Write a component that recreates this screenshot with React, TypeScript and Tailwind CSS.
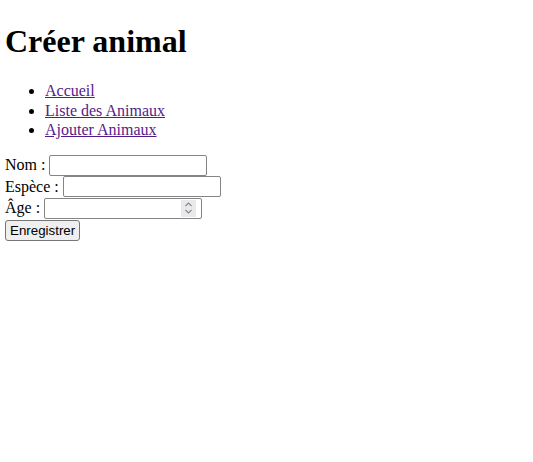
export default function App() {
  return (
    <div className="min-h-screen bg-white px-[5px] pt-[1px] text-[16px] text-black [font-family:'Liberation_Serif','Times_New_Roman',serif]">
      <h1 className="mt-[22px] mb-[21px] text-[32px] font-bold leading-[37px]">
        Créer animal
      </h1>

      <ul className="mb-[15px] list-disc pl-[40px] leading-[19.5px]">
        <li>
          <a href="#" className="text-[#551a8b] underline">
            Accueil
          </a>
        </li>
        <li>
          <a href="#" className="text-[#551a8b] underline">
            Liste des Animaux
          </a>
        </li>
        <li>
          <a href="#" className="text-[#551a8b] underline">
            Ajouter Animaux
          </a>
        </li>
      </ul>

      <form className="flex flex-col items-start">
        <label className="flex h-[21.5px] items-center gap-[4px]">
          Nom :
          <input
            type="text"
            className="h-[21px] w-[158px] rounded-[2px] border border-[#858585] bg-white px-[2px] text-[13px]"
          />
        </label>
        <label className="flex h-[21.5px] items-center gap-[4px]">
          Espèce :
          <input
            type="text"
            className="h-[21px] w-[158px] rounded-[2px] border border-[#858585] bg-white px-[2px] text-[13px]"
          />
        </label>
        <label className="flex h-[21.5px] items-center gap-[4px]">
          Âge :
          <span className="flex h-[21px] w-[158px] items-center justify-end rounded-[2px] border border-[#858585] bg-white pr-[5px]">
            <span className="flex h-[17px] w-[15px] flex-col items-center justify-center bg-[#e9e9ed]">
              <svg width="9" height="14" viewBox="0 0 9 14" fill="none" stroke="#8a8a8a" strokeWidth="1.2">
                <path d="M1.5 5 L4.5 2 L7.5 5" />
                <path d="M1.5 9 L4.5 12 L7.5 9" />
              </svg>
            </span>
          </span>
        </label>
        <button
          type="button"
          className="mt-[1px] h-[21px] rounded-[3px] border border-[#767676] bg-[#efefef] px-[4px] text-[13.33px] text-black [font-family:'Liberation_Sans',Arial,sans-serif]"
        >
          Enregistrer
        </button>
      </form>
    </div>
  );
}
